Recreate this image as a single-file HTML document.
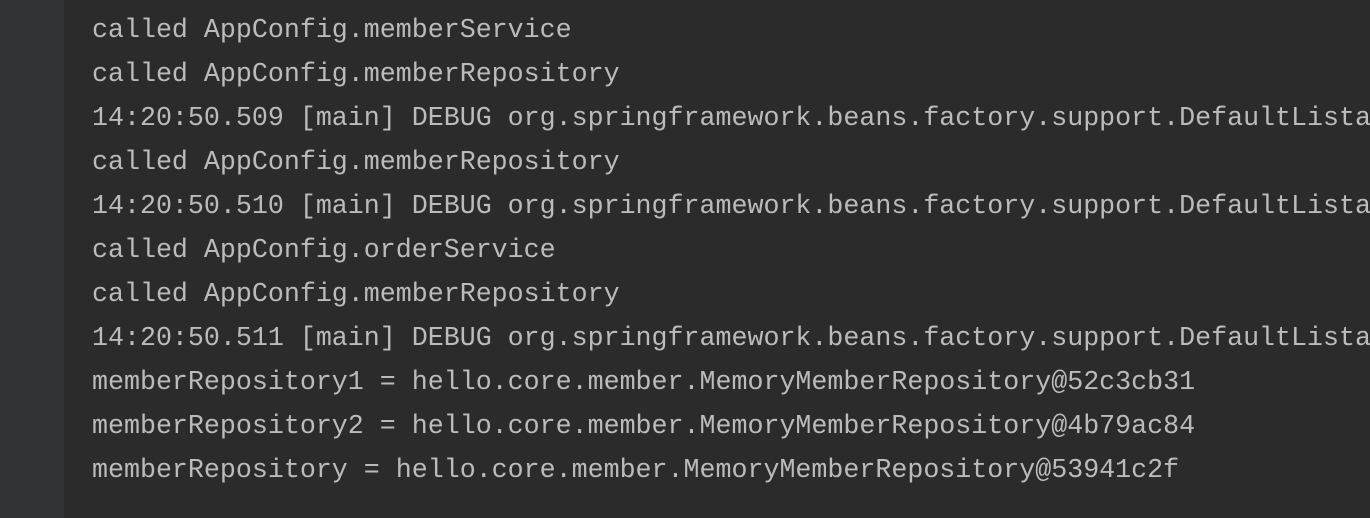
<!DOCTYPE html>
<html><head><style>
html,body{margin:0;padding:0;width:1370px;height:518px;overflow:hidden;background:#2b2b2b;}
.g{position:absolute;left:0;top:0;width:64px;height:518px;background:#313335;}
.t{position:absolute;left:92px;top:-35px;width:1278px;height:553px;overflow:hidden;font-family:"Liberation Mono",monospace;font-size:26.65px;line-height:44px;color:#bbbbbb;white-space:pre;}
</style></head><body>
<div class="g"></div>
<div class="t">14:20:50.508 [main] DEBUG org.springframework.beans.factory.support.DefaultListableBeanFactory
called AppConfig.memberService
called AppConfig.memberRepository
14:20:50.509 [main] DEBUG org.springframework.beans.factory.support.DefaultListableBeanFactory
called AppConfig.memberRepository
14:20:50.510 [main] DEBUG org.springframework.beans.factory.support.DefaultListableBeanFactory
called AppConfig.orderService
called AppConfig.memberRepository
14:20:50.511 [main] DEBUG org.springframework.beans.factory.support.DefaultListableBeanFactory
memberRepository1 = hello.core.member.MemoryMemberRepository@52c3cb31
memberRepository2 = hello.core.member.MemoryMemberRepository@4b79ac84
memberRepository = hello.core.member.MemoryMemberRepository@53941c2f</div>
</body></html>
